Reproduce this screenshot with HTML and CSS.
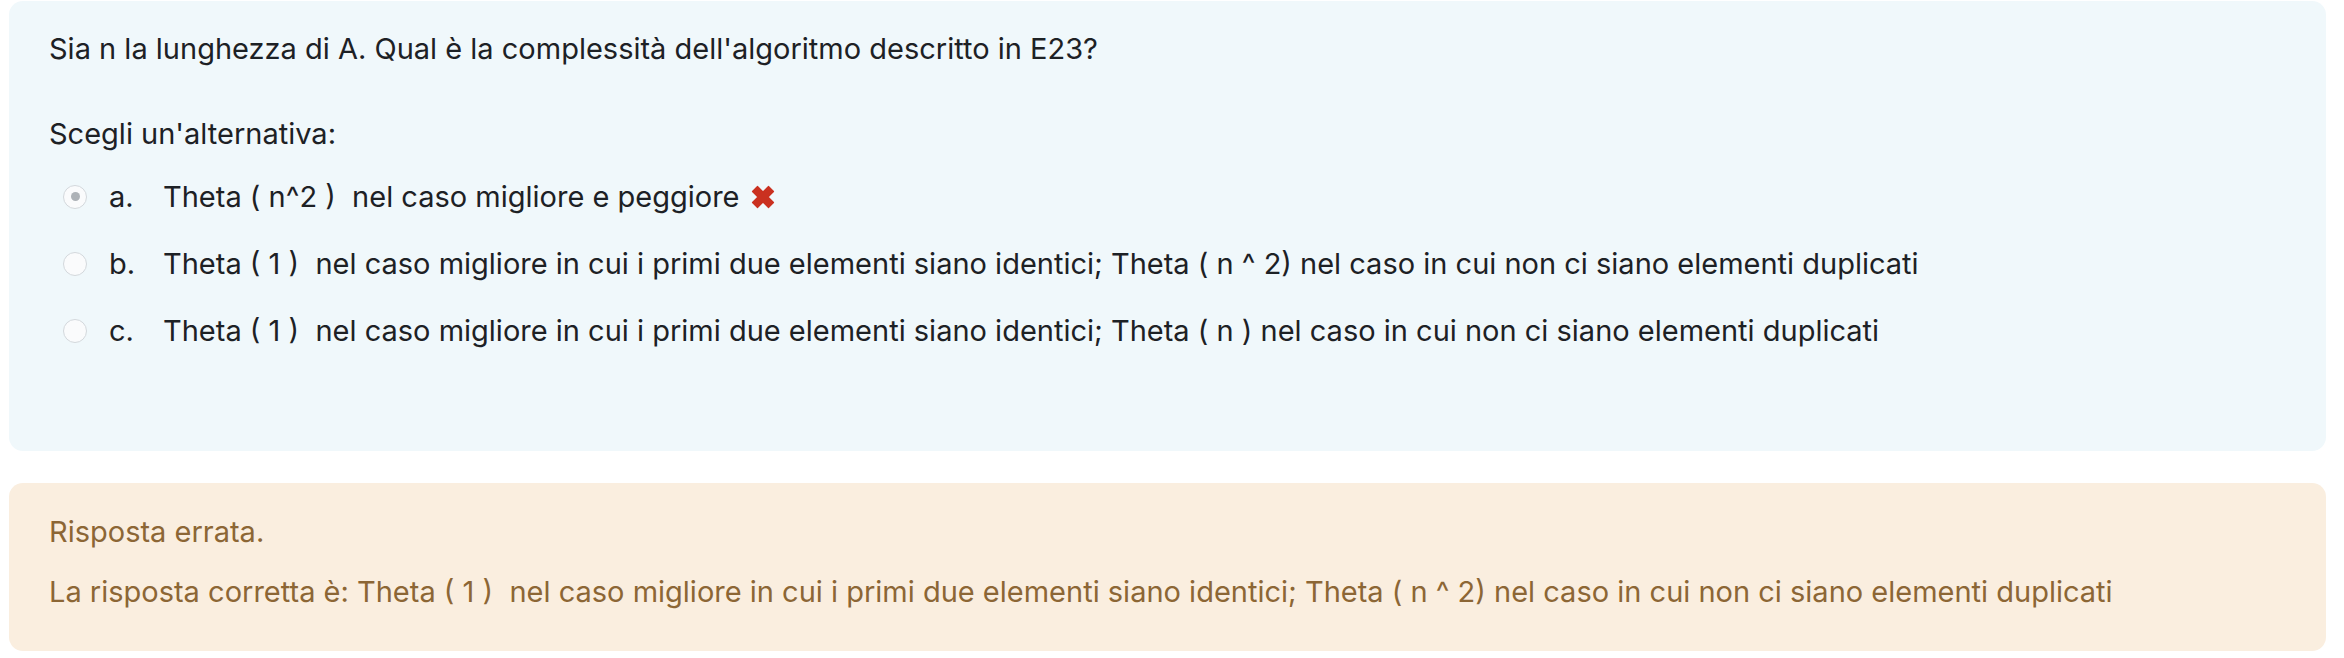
FILE: index.html
```html
<!DOCTYPE html>
<html lang="it">
<head>
<meta charset="utf-8">
<title>Domanda</title>
<link rel="stylesheet" href="styles.css">
</head>
<body>
<div class="que">
  <div class="formulation">
    <div class="qtext">Sia n la lunghezza di A. Qual è la complessità dell'algoritmo descritto in E23?</div>
    <div class="prompt">Scegli un'alternativa:</div>
    <div class="answer">
      <div class="row">
        <span class="radio checked"></span>
        <span class="letter">a.</span>
        <span class="atext">Theta ( n^2 )&nbsp; nel caso migliore e peggiore</span>
        <svg class="wrong" viewBox="0 0 24 24" width="24" height="24" aria-hidden="true"><path d="M1.5 6.5 6.5 1.5 12 7 17.5 1.5 22.5 6.5 17 12 22.5 17.5 17.5 22.5 12 17 6.5 22.5 1.5 17.5 7 12Z" fill="#ca3120" stroke="#ca3120" stroke-width="1.2" stroke-linejoin="round"/></svg>
      </div>
      <div class="row">
        <span class="radio"></span>
        <span class="letter">b.</span>
        <span class="atext">Theta ( 1 )&nbsp; nel caso migliore in cui i primi due elementi siano identici; Theta ( n ^ 2) nel caso in cui non ci siano elementi duplicati</span>
      </div>
      <div class="row">
        <span class="radio"></span>
        <span class="letter">c.</span>
        <span class="atext">Theta ( 1 )&nbsp; nel caso migliore in cui i primi due elementi siano identici; Theta ( n ) nel caso in cui non ci siano elementi duplicati</span>
      </div>
    </div>
  </div>
  <div class="outcome">
    <div class="state">Risposta errata.</div>
    <div class="right">La risposta corretta è: Theta ( 1 )&nbsp; nel caso migliore in cui i primi due elementi siano identici; Theta ( n ^ 2) nel caso in cui non ci siano elementi duplicati</div>
  </div>
</div>
</body>
</html>
```

FILE: styles.css
```css
html, body {
  margin: 0;
  padding: 0;
  background: #ffffff;
}
body {
  font-family: Inter, Roboto, "Liberation Sans", sans-serif;
  font-size: 29px;
  line-height: 45px;
  color: #1d2125;
}
.que {
  padding: 1px 18px 0 9px;
}
.formulation {
  background: #f0f8fb;
  border-radius: 14px;
  padding: 25px 40px 98px 40px;
}
.qtext {
  margin-bottom: 40px;
}
.prompt {
  margin-bottom: 18px;
}
.answer {
  display: flex;
  flex-direction: column;
  gap: 22px;
  padding-left: 14px;
}
.row {
  display: flex;
  align-items: center;
}
.radio {
  flex-shrink: 0;
  width: 24px;
  height: 24px;
  border-radius: 50%;
  border: 1.5px solid #d3d8dc;
  background: #fafbfc;
  box-sizing: border-box;
  display: flex;
  align-items: center;
  justify-content: center;
  margin-right: 22px;
}
.radio.checked::after {
  content: "";
  width: 9px;
  height: 9px;
  border-radius: 50%;
  background: #adb2b7;
}
.letter {
  flex-shrink: 0;
  width: 54px;
}
.wrong {
  flex-shrink: 0;
  margin-left: 11px;
}
.outcome {
  margin-top: 32px;
  background: #faeedf;
  color: #8c6635;
  border-radius: 14px;
  padding: 26px 40px 37px 40px;
}
.state {
  margin-bottom: 15px;
}
```
